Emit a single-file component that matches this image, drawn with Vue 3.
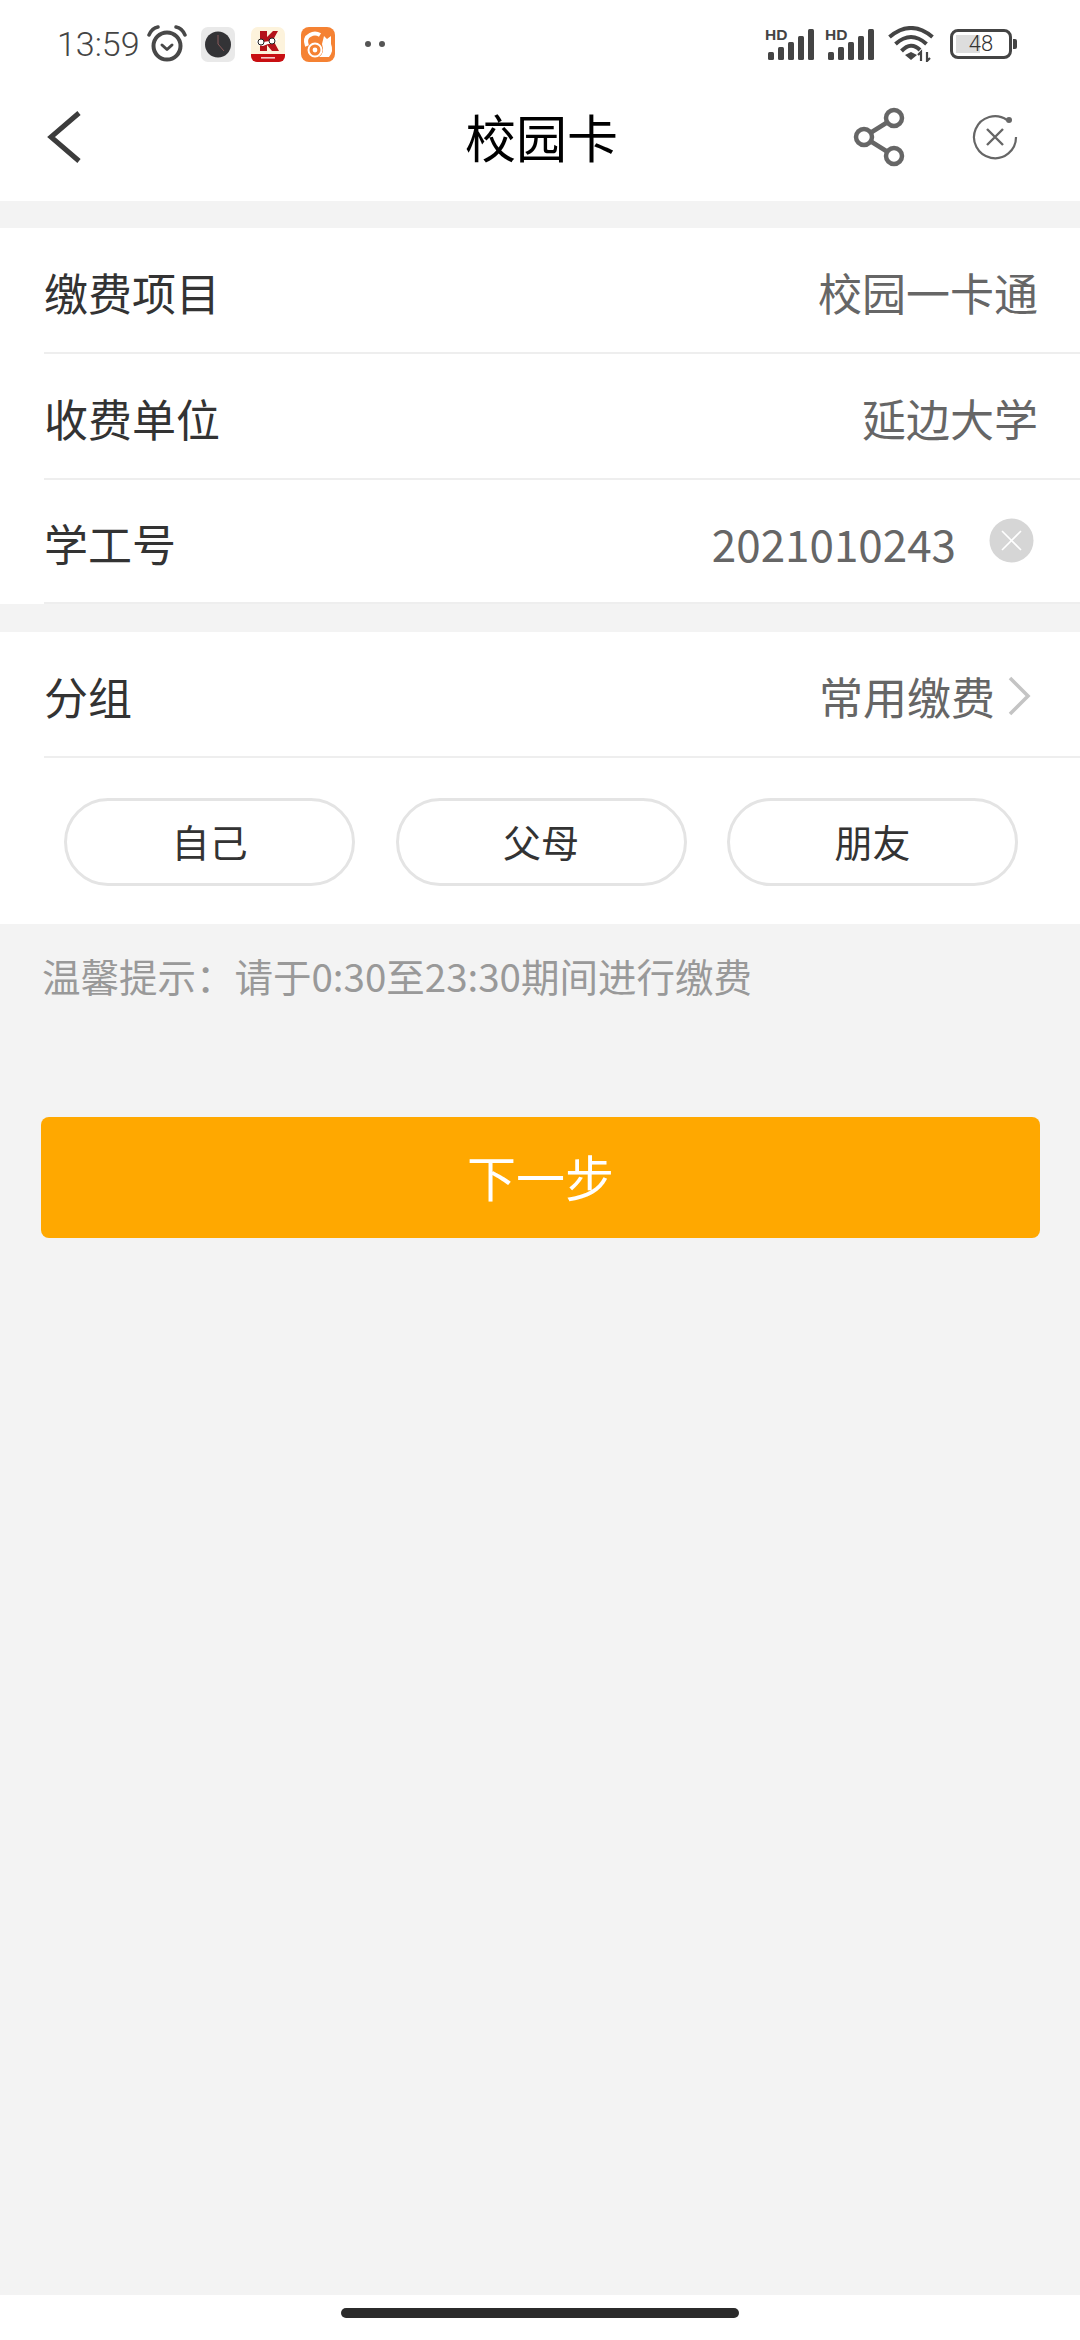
<script setup>
const rows = [
  { label: "缴费项目", value: "校园一卡通" },
  { label: "收费单位", value: "延边大学" },
];
const groups = ["自己", "父母", "朋友"];
const bars = [
  { x: 3, y: 28, h: 8 },
  { x: 13, y: 23, h: 13 },
  { x: 23, y: 18, h: 18 },
  { x: 33, y: 12, h: 24 },
  { x: 43, y: 5, h: 31 },
];
</script>

<template>
  <div class="page">
    <header class="top">
      <div class="status">
        <span class="time">13:59</span>
        <svg class="alarm" width="40" height="38" viewBox="0 0 40 38" fill="none" stroke="#484848">
          <circle cx="20" cy="21" r="13.5" stroke-width="4" />
          <path d="M15 20l5 4.5 5-4.5" stroke-width="3" stroke-linecap="round" stroke-linejoin="round" />
          <path d="M2 10Q5 3 11 2M38 10Q35 3 29 2" stroke-width="3.5" stroke-linecap="round" />
        </svg>
        <svg class="app" width="34" height="35" viewBox="0 0 34 35">
          <rect width="34" height="35" rx="7" fill="#e9e9e9" />
          <circle cx="17" cy="17.5" r="13" fill="#333336" />
          <path d="M17 8v9l6 7" stroke="#8a5a5a" stroke-width="1" fill="none" />
        </svg>
        <svg class="app" width="34" height="35" viewBox="0 0 34 35">
          <rect width="34" height="35" rx="7" fill="#fdf3dc" />
          <path d="M0 27h34v2a6 6 0 0 1-6 6H6a6 6 0 0 1-6-6z" fill="#c80f12" />
          <path d="M9 4h7v6l6-6h5l-5 9 6 11h-7l-5-6v6h-7z" fill="#b4121a" />
          <path d="M4 13l8 2 7-1 9-3-6 6-5 0-5 2-5-1z" fill="#fff" />
          <circle cx="10" cy="15" r="3" fill="#fff" stroke="#222" stroke-width="1" />
          <circle cx="21" cy="14" r="3" fill="#fff" stroke="#222" stroke-width="1" />
          <rect x="10" y="30" width="14" height="1.6" fill="#f6c9c9" />
        </svg>
        <svg class="app" width="34" height="35" viewBox="0 0 34 35">
          <rect width="34" height="35" rx="8" fill="#f58233" />
          <path d="M6 19Q3 11 9 8Q14 5 19 8" fill="none" stroke="#fff" stroke-width="4" />
          <circle cx="14" cy="23" r="6.5" fill="none" stroke="#fff" stroke-width="2" />
          <circle cx="14" cy="23" r="2.4" fill="#fff" />
          <path d="M21 17L23 9L26 12L30 9L30 17Q33 24 28 30H18Q24 26 21 17z" fill="#fff" />
        </svg>
        <span class="dots"><i></i><i></i></span>
        <span class="grow"></span>
        <svg class="sig" width="50" height="37" viewBox="0 0 50 37">
          <text x="0" y="15.5" class="hd">HD</text>
          <rect v-for="b in bars" :key="b.x" :x="b.x" :y="b.y" width="6" :height="b.h" rx="1.5" fill="#444" />
        </svg>
        <svg class="sig sig2" width="50" height="37" viewBox="0 0 50 37">
          <text x="0" y="15.5" class="hd">HD</text>
          <rect v-for="b in bars" :key="b.x" :x="b.x" :y="b.y" width="6" :height="b.h" rx="1.5" fill="#444" />
        </svg>
        <svg class="wifi" width="46" height="36" viewBox="0 0 46 36" fill="none" stroke="#444" stroke-width="4">
          <path d="M1.5 11Q23-7 44.5 11" />
          <path d="M7.5 18Q23 4 38.5 18" />
          <path d="M13.5 25Q23 15 32 24" />
          <path d="M17 29l6-3 6 3-6 5z" fill="#444" stroke="none" />
          <path d="M33 35V26l-3 3M39 26v9l3-3" stroke-width="2.2" />
        </svg>
        <div class="battery">
          <div class="cell">
            <span class="fill"></span>
            <span class="pct">48</span>
          </div>
          <span class="tip"></span>
        </div>
      </div>

      <nav class="nav">
        <div class="nav-left">
          <svg width="34" height="52" viewBox="0 0 34 52" fill="none" stroke="#3c3c3c" stroke-width="5">
            <path d="M32 2L4 26l28 24" />
          </svg>
        </div>
        <h1 class="title">校园卡</h1>
        <div class="nav-right">
          <svg class="share" width="54" height="60" viewBox="0 0 54 60" fill="none" stroke="#666" stroke-width="4.5">
            <circle cx="41" cy="11" r="8" />
            <circle cx="11" cy="30" r="8" />
            <circle cx="41" cy="49" r="8" />
            <path d="M18 25.5l16-10M18 34.5l16 10" />
          </svg>
          <svg width="46" height="46" viewBox="0 0 46 46" fill="none" stroke="#666">
            <path d="M35 6A21 21 0 1 0 44 23" stroke-width="2.2" />
            <circle cx="37" cy="6" r="3" fill="#666" stroke="none" />
            <path d="M15 15l16 16M31 15L15 31" stroke-width="2.4" />
          </svg>
        </div>
      </nav>
    </header>

    <section class="card first">
      <div v-for="r in rows" :key="r.label" class="row">
        <span class="label">{{ r.label }}</span>
        <span class="value">{{ r.value }}</span>
      </div>
      <div class="row row-input">
        <span class="label">学工号</span>
        <span class="value num">2021010243</span>
        <svg class="clear" width="45" height="45" viewBox="0 0 45 45">
          <circle cx="22.5" cy="22.5" r="22" fill="#d6d6d6" />
          <path d="M13 13l19 19M32 13L13 32" stroke="#fff" stroke-width="1.6" />
        </svg>
      </div>
    </section>

    <section class="card second">
      <div class="row row-input">
        <span class="label">分组</span>
        <span class="value">常用缴费</span>
        <svg class="arrow" width="24" height="40" viewBox="0 0 24 40" fill="none" stroke="#c4c4c4" stroke-width="3.6">
          <path d="M3 2l18 18L3 38" />
        </svg>
      </div>
      <div class="chips">
        <button v-for="g in groups" :key="g" class="chip">{{ g }}</button>
      </div>
    </section>

    <p class="hint">温馨提示：请于0:30至23:30期间进行缴费</p>

    <button class="next">下一步</button>

    <div class="grow"></div>
    <footer class="home"><span class="home-bar"></span></footer>
  </div>
</template>

<style scoped>
.page {
  min-height: 100vh;
  display: flex;
  flex-direction: column;
  background: #f3f3f3;
  font-family: "Noto Sans CJK SC", "Noto Sans", sans-serif;
}

.grow {
  flex: 1;
}

.top {
  background: #fff;
}

.status {
  height: 84px;
  display: flex;
  align-items: center;
  padding: 4px 63px 0 57px;
  box-sizing: border-box;
}

.time {
  font-family: Roboto, sans-serif;
  font-weight: 300;
  font-size: 34px;
  color: #444;
  width: 90px;
}

.alarm {
  margin-right: 14px;
}

.app {
  margin-right: 16px;
}

.dots {
  display: flex;
  gap: 8px;
  margin-left: 14px;
}

.dots i {
  width: 6px;
  height: 6px;
  border-radius: 50%;
  background: #555;
}

.hd {
  font-family: "Liberation Sans", sans-serif;
  font-weight: 700;
  font-size: 15.5px;
  fill: #444;
}

.sig {
  margin-top: -4px;
}

.sig2 {
  margin-left: 10px;
}

.wifi {
  margin-left: 13px;
}

.battery {
  display: flex;
  align-items: center;
  margin-left: 16px;
}

.cell {
  width: 62px;
  height: 30px;
  box-sizing: border-box;
  border: 3.5px solid #444;
  border-radius: 8px;
  position: relative;
  display: flex;
  align-items: center;
  justify-content: center;
}

.fill {
  position: absolute;
  left: 3px;
  top: 3px;
  bottom: 3px;
  width: 24px;
  background: #ddd;
}

.pct {
  position: relative;
  font-family: Roboto, sans-serif;
  font-weight: 300;
  font-size: 22px;
  color: #333;
  line-height: 1;
}

.tip {
  width: 4px;
  height: 10px;
  background: #444;
  border-radius: 0 2px 2px 0;
  margin-left: 1px;
}

.nav {
  height: 117px;
  box-sizing: border-box;
  display: grid;
  grid-template-columns: 1fr auto 1fr;
  align-items: center;
  padding: 0 47px 12px;
}

.nav-left {
  display: flex;
}

.title {
  margin: 0 0 0 3px;
  font-size: 51px;
  font-weight: 400;
  color: #000;
  line-height: 1;
}

.nav-right {
  display: flex;
  align-items: center;
  justify-content: flex-end;
  gap: 65px;
  margin-right: 15px;
}

.card {
  background: #fff;
  padding-left: 44px;
}

.first {
  margin-top: 27px;
}

.second {
  margin-top: 28px;
}

.row {
  height: 126px;
  box-sizing: border-box;
  display: flex;
  align-items: center;
  border-bottom: 2px solid #eee;
  padding: 4px 42px 0 0;
}

.row:nth-child(3) {
  height: 124px;
  padding-top: 3px;
}

.row-input {
  padding-right: 48px;
}

.label {
  flex: 1;
  font-size: 44px;
  color: #333;
}

.value {
  font-size: 44px;
  color: #666;
}

.clear {
  margin-left: 33px;
  margin-right: -2px;
  margin-bottom: 5px;
}

.arrow {
  margin-left: 12px;
  margin-right: 1px;
}

.chips {
  display: flex;
  justify-content: space-between;
  padding: 40px 62px 38px 20px;
}

.chip {
  width: 291px;
  height: 88px;
  padding: 0 0 4px;
  background: #fff;
  border: 3px solid #e4e4e4;
  border-radius: 44px;
  font-family: inherit;
  font-size: 38px;
  color: #333;
}

.hint {
  margin: 24px 0 0 42px;
  font-size: 38.5px;
  line-height: 54px;
  color: #999;
}

.next {
  margin: 115px 40px 0 41px;
  height: 121px;
  padding: 0 0 4px;
  border: 0;
  border-radius: 8px;
  background: #ffa800;
  font-family: inherit;
  font-size: 49px;
  color: #fff;
}

.home {
  height: 45px;
  background: #fff;
  display: flex;
  justify-content: center;
  padding-top: 13px;
  box-sizing: border-box;
}

.home-bar {
  width: 398px;
  height: 10px;
  border-radius: 5px;
  background: #2b2b2b;
}
</style>

<style>
body {
  margin: 0;
}
</style>
